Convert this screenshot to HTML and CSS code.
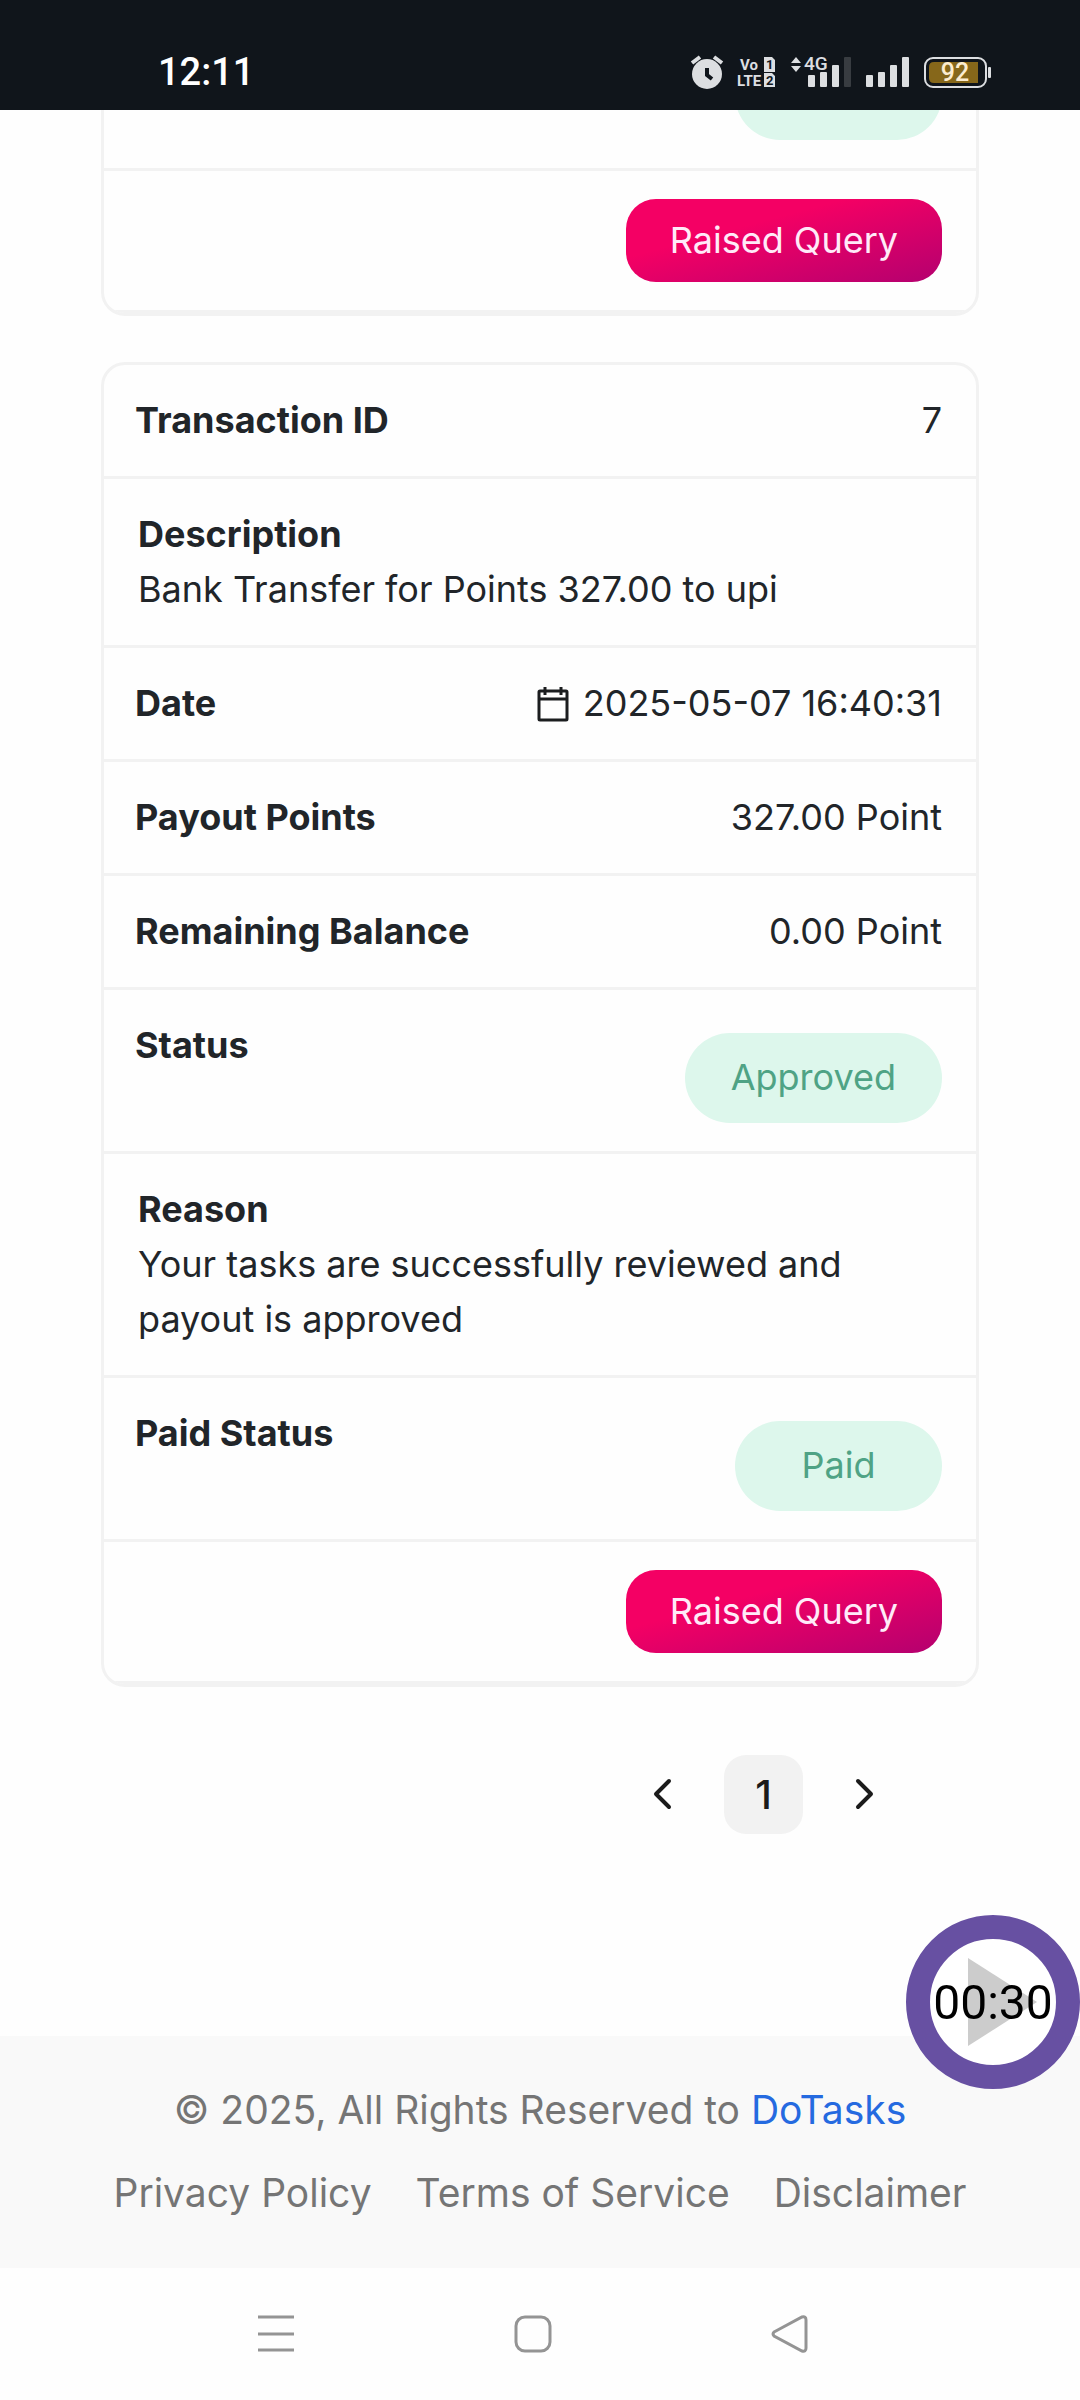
FILE: index.html
```html
<!DOCTYPE html>
<html lang="en">

<head>
    <meta charset="utf-8">
    <meta name="viewport" content="width=device-width, initial-scale=1.0">
    <title>DoTasks</title>
    <link rel="stylesheet" href="styles.css">
</head>

<body>
    <header class="status-bar">
        <span class="clock">12:11</span>
        <div class="status-icons">
            <!-- alarm -->
            <svg width="33" height="36" viewBox="0 0 33 36" fill="#dcdee1">
                <circle cx="16" cy="20" r="15" />
                <path d="M1 9L9 3M31 9L23 3" stroke="#dcdee1" stroke-width="4" />
                <path d="M16 14v7l5 4" fill="none" stroke="#10151b" stroke-width="4" />
            </svg>
            <!-- volte -->
            <svg width="37" height="36" viewBox="0 0 37 36" fill="#dcdee1">
                <text class="tiny" x="1" y="16">Vo</text>
                <text class="tiny" x="-2" y="32">LTE</text>
                <path d="M25 3h8l3 3v12H25zM25 19h8l3 3v11H25z" />
                <text class="sim" x="27" y="15">1</text>
                <text class="sim" x="27" y="31">2</text>
            </svg>
            <!-- sim 1 -->
            <svg width="60" height="36" viewBox="0 0 60 36" fill="#dcdee1">
                <path d="M0 9l5-6 5 6zM0 12h10l-5 6z" />
                <text class="net" x="13" y="16">4G</text>
                <rect x="17" y="21" width="7" height="12" rx="1" />
                <rect x="29" y="18" width="7" height="15" rx="1" />
                <rect x="41" y="11" width="7" height="22" rx="1" />
                <rect x="53" y="3" width="7" height="30" rx="1" fill="#383c41" />
            </svg>
            <!-- sim 2 -->
            <svg width="43" height="36" viewBox="0 0 43 36" fill="#dcdee1">
                <rect x="0" y="21" width="7" height="12" rx="1" />
                <rect x="12" y="18" width="7" height="15" rx="1" />
                <rect x="24" y="11" width="7" height="22" rx="1" />
                <rect x="36" y="3" width="7" height="30" rx="1" />
            </svg>
            <!-- battery -->
            <svg width="68" height="36" viewBox="0 0 68 36">
                <rect x="1" y="4" width="61" height="29" rx="8" fill="none" stroke="#dcdee1" stroke-width="2" />
                <path d="M54 8H10q-5 0-5 5v11q0 5 5 5h44z" fill="#86671a" />
                <rect x="64" y="13" width="3" height="11" rx="1" fill="#dcdee1" />
                <text class="level" x="31" y="27" text-anchor="middle">92</text>
            </svg>
        </div>
    </header>

    <div class="page">
        <main class="transactions">
            <ul class="card">
                <li class="row">
                    <span class="badge"></span>
                </li>
                <li class="row">
                    <button type="button" class="query-btn">Raised Query</button>
                </li>
            </ul>

            <ul class="card">
                <li class="row">
                    <b>Transaction ID</b>
                    <span class="value">7</span>
                </li>
                <li class="row row-text">
                    <b>Description</b>
                    <p>Bank Transfer for Points 327.00 to upi</p>
                </li>
                <li class="row">
                    <b>Date</b>
                    <span class="value">
                        <svg width="32" height="36" viewBox="0 0 32 36" fill="none" stroke="#1b1d1f" stroke-width="3">
                            <rect x="2" y="5" width="28" height="29" rx="1" />
                            <path d="M1 13h30M8 1v8M24 1v8" />
                        </svg>
                        2025-05-07 16:40:31
                    </span>
                </li>
                <li class="row">
                    <b>Payout Points</b>
                    <span class="value">327.00 Point</span>
                </li>
                <li class="row">
                    <b>Remaining Balance</b>
                    <span class="value">0.00 Point</span>
                </li>
                <li class="row">
                    <b>Status</b>
                    <span class="badge">Approved</span>
                </li>
                <li class="row row-text">
                    <b>Reason</b>
                    <p>Your tasks are successfully reviewed and payout is approved</p>
                </li>
                <li class="row">
                    <b>Paid Status</b>
                    <span class="badge">Paid</span>
                </li>
                <li class="row">
                    <button type="button" class="query-btn">Raised Query</button>
                </li>
            </ul>
        </main>

        <nav class="pagination">
            <a href="#" aria-label="Previous">
                <svg width="20" height="33" viewBox="0 0 20 33"><path d="M16 3L3 16l13 13" /></svg>
            </a>
            <a href="#" class="active">1</a>
            <a href="#" aria-label="Next">
                <svg width="20" height="33" viewBox="0 0 20 33"><path d="M3 3l13 13L3 29" /></svg>
            </a>
        </nav>

        <footer class="footer">
            <p>© 2025, All Rights Reserved to <a href="#" class="brand">DoTasks</a></p>
            <div class="footer-links">
                <a href="#">Privacy Policy</a>
                <a href="#">Terms of Service</a>
                <a href="#">Disclaimer</a>
            </div>
        </footer>
    </div>

    <div class="nav-bar">
        <button type="button" aria-label="Recent apps">
            <svg width="38" height="38" viewBox="0 0 38 38"><path d="M1 2h36M1 19h36M1 35h36" /></svg>
        </button>
        <button type="button" aria-label="Home">
            <svg width="38" height="38" viewBox="0 0 38 38"><rect x="2" y="2" width="34" height="34" rx="9" /></svg>
        </button>
        <button type="button" aria-label="Back">
            <svg width="38" height="38" viewBox="0 0 38 38"><path d="M3 17L31 2q4-1 4 3v28q0 4-4 3L3 21q-2-2 0-4z" /></svg>
        </button>
    </div>

    <!-- floating countdown -->
    <div class="timer">
        <svg class="play" width="69" height="88" viewBox="0 0 69 88"><path d="M0 0l69 44L0 88z" fill="#ccc" /></svg>
        <span>00:30</span>
    </div>
</body>

</html>
```

FILE: styles.css
```css
* {
    box-sizing: border-box;
}

body {
    margin: 0;
    height: 100vh;
    display: flex;
    flex-direction: column;
    background-color: #fefefe;
    color: #212529;
    font-family: Inter, "Liberation Sans", sans-serif;
    font-size: 36px;
    line-height: 55px;
}

p {
    margin: 0;
}

a {
    color: inherit;
    text-decoration: none;
}

svg {
    display: block;
    overflow: visible;
}

/* phone status bar */
.status-bar {
    flex: none;
    height: 110px;
    padding: 34px 88px 0 158px;
    display: flex;
    justify-content: space-between;
    align-items: center;
    background-color: #10151b;
    color: #fff;
}

.clock {
    font-family: Roboto, sans-serif;
    font-size: 38px;
    font-weight: 500;
}

.status-icons {
    display: flex;
    gap: 15px;
}

.tiny {
    font: bold 15px Roboto, sans-serif;
}

.sim {
    font: bold 13px Roboto, sans-serif;
    fill: #10151b;
}

.net {
    font: 500 19px Roboto, sans-serif;
}

.level {
    font: 500 25px Roboto, sans-serif;
    fill: #fbecd0;
}

/* the page stays scrolled to its end */
.page {
    flex: 1;
    min-height: 0;
    overflow: hidden;
    display: flex;
    flex-direction: column;
    justify-content: flex-end;
}

.transactions {
    padding: 0 101px;
    display: flex;
    flex-direction: column;
    gap: 46px;
}

.card {
    margin: 0;
    padding: 0;
    list-style: none;
    border: 3px solid #f2f2f2;
    border-radius: 24px;
    overflow: hidden;
}

.row {
    display: flex;
    justify-content: space-between;
    align-items: flex-start;
    padding: 28px 34px 28px 31px;
    border-bottom: 3px solid #f2f2f2;
}

.row b {
    font-weight: 700;
}

.row-text {
    display: block;
    padding-left: 34px;
}

.value {
    display: flex;
    align-items: center;
    gap: 14px;
}

.badge {
    margin: 15px 0 0 auto;
    min-width: 207px;
    min-height: 90px;
    padding: 17px 46px 18px;
    border-radius: 45px;
    background-color: #ddf7ec;
    color: #4fa385;
    text-align: center;
}

.query-btn {
    margin-left: auto;
    padding: 14px 44px;
    border: none;
    border-radius: 30px;
    background: linear-gradient(165deg, #f40064 35%, #b4006f);
    color: #ffeaf8;
    font: inherit;
    cursor: pointer;
}

.pagination {
    display: flex;
    justify-content: flex-end;
    gap: 22px;
    padding: 68px 176px 202px 0;
}

.pagination a {
    width: 79px;
    height: 79px;
    display: flex;
    justify-content: center;
    align-items: center;
    border-radius: 22px;
    font-size: 40px;
    font-weight: 500;
    color: #1b1b1b;
}

.pagination .active {
    background-color: #f2f2f2;
}

.pagination path {
    fill: none;
    stroke: #1b1b1b;
    stroke-width: 4;
    stroke-linecap: round;
    stroke-linejoin: round;
}

.footer {
    display: flex;
    flex-direction: column;
    gap: 23px;
    padding: 44px 0 45px;
    background-color: #f9f9f9;
    color: #757575;
    font-size: 39px;
    line-height: 60px;
    text-align: center;
}

.footer-links {
    display: flex;
    justify-content: center;
    gap: 44px;
}

.brand {
    color: #256ae0;
}

/* phone navigation keys */
.nav-bar {
    flex: none;
    height: 132px;
    padding: 0 162px 0 147px;
    display: flex;
    justify-content: space-around;
    align-items: center;
}

.nav-bar button {
    padding: 0;
    border: none;
    background: none;
}

.nav-bar path,
.nav-bar rect {
    fill: none;
    stroke: #949494;
    stroke-width: 3;
}

.timer {
    position: fixed;
    right: 0;
    bottom: 311px;
    width: 174px;
    height: 174px;
    display: grid;
    place-items: center;
    border: 24px solid #6750a2;
    border-radius: 50%;
    background-color: #fff;
    color: #000;
    font-family: Roboto, sans-serif;
    font-size: 48px;
}

.timer > * {
    grid-area: 1 / 1;
}

.play {
    margin-left: 18px;
}
```
